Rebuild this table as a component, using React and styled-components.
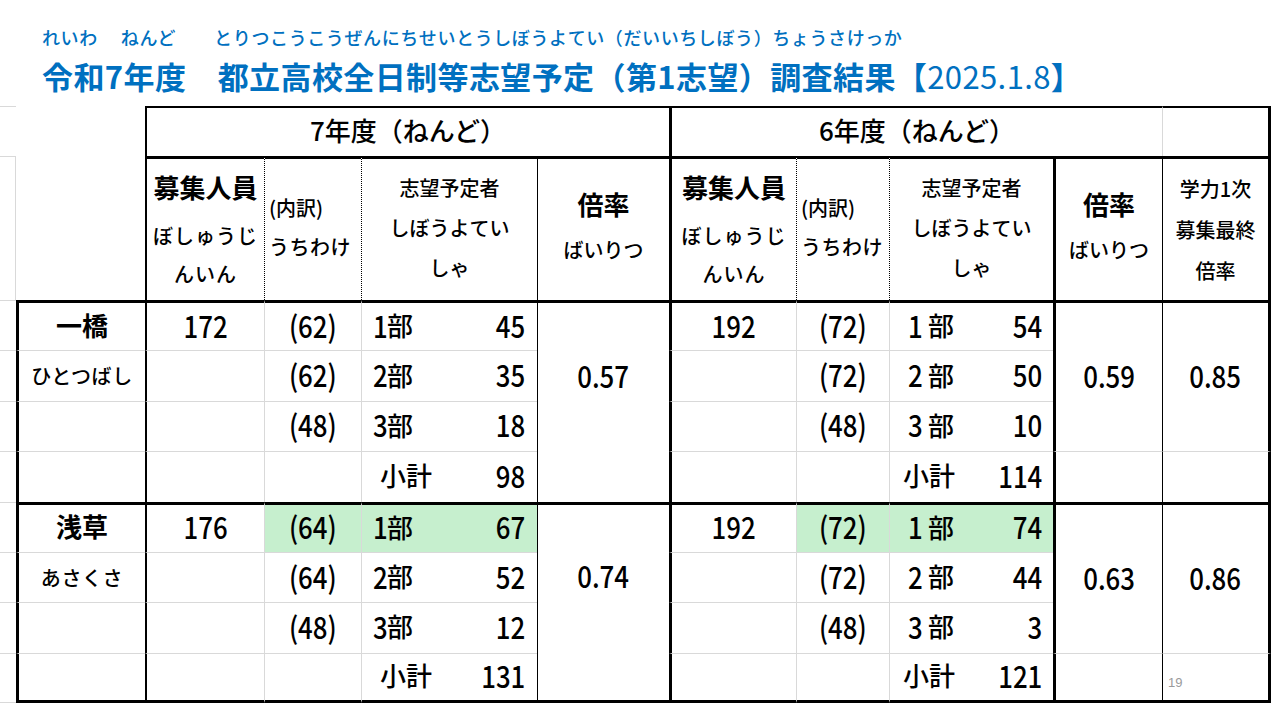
import React from "react";
import styled, { createGlobalStyle } from "styled-components";

const GlobalStyle = createGlobalStyle`
  html, body {
    margin: 0;
    padding: 0;
    background: #fff;
  }
  body {
    font-family: "Noto Sans CJK JP", sans-serif;
    color: #000;
  }
`;

const LINES = {
  thick: "3px solid #000",
  mid: "2px solid #000",
  thin: "1px solid #000",
  grey: "1px solid #d9d9d9",
  dot: "1px dotted #000"
};
const line = kind => LINES[kind] || "none";

const Page = styled.div`
  width: 1280px;
  height: 720px;
  overflow: hidden;
  display: flex;
  flex-direction: column;
`;

const Heading = styled.header`
  padding: 26px 0 0 42px;
  color: #0070c0;
  display: flex;
  flex-direction: column;
`;

const RubyLine = styled.div`
  display: flex;
  font-size: 18px;
  font-weight: 500;
  line-height: 22px;
  letter-spacing: 0.6px;
  white-space: nowrap;
`;

const Ruby = styled.span`
  margin-left: ${p => p.$gap || 0}px;
`;

const Title = styled.h1`
  margin: 8px 0 0;
  font-size: 31px;
  font-weight: 700;
  line-height: 40px;
  letter-spacing: 0.4px;
  white-space: nowrap;
`;

const DateText = styled.span`
  font-weight: 400;
`;

const Sheet = styled.div`
  margin-top: 10px;
  display: grid;
  grid-template-columns: 16px 129px 119px 97px 176px 132px 127px 93px 164px 109px 109px;
  grid-template-rows: 50px 144px repeat(8, 50.375px);
`;

const Cell = styled.div`
  grid-column: ${p => p.$col};
  grid-row: ${p => p.$row};
  box-sizing: border-box;
  min-width: 0;
  border-left: ${p => line(p.$l)};
  border-top: ${p => line(p.$t)};
  border-right: ${p => line(p.$r)};
  border-bottom: ${p => line(p.$b)};
  background: ${p => (p.$hl ? "#c6efce" : "transparent")};
  display: flex;
  flex-direction: column;
  align-items: ${p => p.$align || "center"};
  justify-content: center;
  padding: ${p => p.$pad || "0"};
`;

const SplitCell = styled(Cell)`
  flex-direction: row;
  justify-content: space-between;
  align-items: center;
`;

const PageCell = styled(Cell)`
  justify-content: flex-end;
  align-items: flex-start;
`;

const YearHead = styled.div`
  font-size: 26px;
  font-weight: 500;
  line-height: 1;
  padding-bottom: 5px;
  white-space: nowrap;
`;

const HeadBig = styled.div`
  font-size: 26px;
  font-weight: 700;
  line-height: 40px;
  margin-bottom: ${p => p.$gap || 0}px;
  white-space: nowrap;
`;

const HeadKana = styled.div`
  font-size: 20px;
  font-weight: 500;
  line-height: ${p => p.$lh || 39}px;
  letter-spacing: ${p => p.$ls || 0}px;
  white-space: nowrap;
`;

const Name = styled.div`
  font-size: 26px;
  font-weight: 700;
  line-height: 1;
  padding-bottom: 4px;
`;

const NameKana = styled.div`
  font-size: 20px;
  font-weight: 500;
  letter-spacing: 0.6px;
  line-height: 1;
`;

const Num = styled.span`
  display: inline-block;
  font-size: 30px;
  font-weight: 500;
  line-height: 1;
  padding-bottom: 4px;
  transform: scaleX(0.86);
  transform-origin: ${p => p.$origin || "center"};
  white-space: nowrap;
`;

const LabelNum = styled(Num)`
  margin-right: -3px;
`;

const Label = styled.span`
  display: inline-flex;
  align-items: center;
  font-size: 26px;
  font-weight: 500;
  line-height: 1;
  white-space: pre;
`;

const LabelText = styled.span`
  padding-bottom: 3px;
`;

const PageNo = styled.span`
  font-family: "Liberation Sans", sans-serif;
  font-size: 13px;
  color: #9a9a9a;
  line-height: 1;
`;

const schools = [
  {
    name: "一橋",
    kana: "ひとつばし",
    y7: {
      cap: 172,
      parts: [62, 62, 48],
      vals: [45, 35, 18],
      total: 98,
      rate: "0.57"
    },
    y6: {
      cap: 192,
      parts: [72, 72, 48],
      vals: [54, 50, 10],
      total: 114,
      rate: "0.59",
      final: "0.85"
    },
    hl: false
  },
  {
    name: "浅草",
    kana: "あさくさ",
    y7: {
      cap: 176,
      parts: [64, 64, 48],
      vals: [67, 52, 12],
      total: 131,
      rate: "0.74"
    },
    y6: {
      cap: 192,
      parts: [72, 72, 48],
      vals: [74, 44, 3],
      total: 121,
      rate: "0.63",
      final: "0.86"
    },
    hl: true
  }
];

const HeaderRows = () => (
  <>
    <Cell $col={1} $row={1} $t="grey" />
    <Cell $col="3 / 7" $row={1} $t="mid" $l="mid">
      <YearHead>7年度（ねんど）</YearHead>
    </Cell>
    <Cell $col="7 / 11" $row={1} $t="mid" $l="thick">
      <YearHead>6年度（ねんど）</YearHead>
    </Cell>
    <Cell $col={11} $row={1} $t="mid" $l="grey" $r="thick" />

    <Cell $col={1} $row={2} $t="grey" $r="grey" />
    {[3, 7].map(c => {
      const first = c === 3;
      return (
        <React.Fragment key={c}>
          <Cell $col={c} $row={2} $t="thick" $l={first ? "mid" : "thick"}>
            <HeadBig $gap={10}>募集人員</HeadBig>
            <HeadKana $ls={1} $lh={38}>ぼしゅうじ</HeadKana>
            <HeadKana $ls={1} $lh={38}>んいん</HeadKana>
          </Cell>
          <Cell
            $col={c + 1}
            $row={2}
            $t="thick"
            $l="dot"
            $align="flex-start"
            $pad="0 0 6px 4px"
          >
            <HeadKana>(内訳)</HeadKana>
            <HeadKana $ls={0.5}>うちわけ</HeadKana>
          </Cell>
          <Cell $col={c + 2} $row={2} $t="thick" $l="dot" $pad="0 0 4px">
            <HeadKana $lh={40}>志望予定者</HeadKana>
            <HeadKana $lh={40}>しぼうよてい</HeadKana>
            <HeadKana $lh={40}>しゃ</HeadKana>
          </Cell>
          <Cell
            $col={c + 3}
            $row={2}
            $t="thick"
            $l={first ? "thin" : "thick"}
            $pad="0 0 3px"
          >
            <HeadBig $gap={4}>倍率</HeadBig>
            <HeadKana $lh={44}>ばいりつ</HeadKana>
          </Cell>
        </React.Fragment>
      );
    })}
    <Cell $col={11} $row={2} $t="thick" $l="thin" $r="thick">
      <HeadKana $lh={41}>学力1次</HeadKana>
      <HeadKana $lh={41}>募集最終</HeadKana>
      <HeadKana $lh={41}>倍率</HeadKana>
    </Cell>
  </>
);

const PartLabel = ({ index, spaced }) => (
  <Label>
    <LabelNum $origin="left">{index + 1}</LabelNum>
    <LabelText>{spaced ? " 部" : "部"}</LabelText>
  </Label>
);

const Subtotal = () => (
  <Label>
    <LabelText>小計</LabelText>
  </Label>
);

const SchoolBlock = ({ school, start, last }) => {
  const { y7, y6 } = school;
  const rows = [0, 1, 2, 3];
  const bottom = i => (last && i === 3 ? "thick" : undefined);
  return (
    <>
      {rows.map(i => {
        const row = start + i;
        const t = i === 0 ? "thick" : "grey";
        const hl = school.hl && i === 0;
        const b = bottom(i);
        return (
          <React.Fragment key={i}>
            <Cell
              $col={1}
              $row={row}
              $t="grey"
              $b={last && i === 3 ? "grey" : undefined}
            />
            <Cell $col={2} $row={row} $t={t} $l="thick" $b={b}>
              {i === 0 && <Name>{school.name}</Name>}
              {i === 1 && <NameKana>{school.kana}</NameKana>}
            </Cell>

            <Cell $col={3} $row={row} $t={t} $l="mid" $b={b}>
              {i === 0 && <Num>{y7.cap}</Num>}
            </Cell>
            <Cell $col={4} $row={row} $t={t} $l="grey" $b={b} $hl={hl}>
              {i < 3 && <Num>({y7.parts[i]})</Num>}
            </Cell>
            <SplitCell
              $col={5}
              $row={row}
              $t={t}
              $l="grey"
              $b={b}
              $hl={hl}
              $pad={i < 3 ? "0 12px 0 11px" : "0 12px 0 18px"}
            >
              {i < 3 ? <PartLabel index={i} /> : <Subtotal />}
              <Num $origin="right">{i < 3 ? y7.vals[i] : y7.total}</Num>
            </SplitCell>

            <Cell $col={7} $row={row} $t={t} $l="thick" $b={b}>
              {i === 0 && <Num>{y6.cap}</Num>}
            </Cell>
            <Cell $col={8} $row={row} $t={t} $l="grey" $b={b} $hl={hl}>
              {i < 3 && <Num>({y6.parts[i]})</Num>}
            </Cell>
            <SplitCell
              $col={9}
              $row={row}
              $t={t}
              $l="grey"
              $b={b}
              $hl={hl}
              $pad={i < 3 ? "0 11px 0 18px" : "0 11px 0 13px"}
            >
              {i < 3 ? <PartLabel index={i} spaced /> : <Subtotal />}
              <Num $origin="right">{i < 3 ? y6.vals[i] : y6.total}</Num>
            </SplitCell>
          </React.Fragment>
        );
      })}

      <Cell
        $col={6}
        $row={`${start} / ${start + 4}`}
        $t="thick"
        $l="thin"
        $b={last ? "thick" : undefined}
        $pad="0 0 50px"
      >
        <Num>{y7.rate}</Num>
      </Cell>

      <Cell $col={10} $row={`${start} / ${start + 3}`} $t="thick" $l="thick">
        <Num>{y6.rate}</Num>
      </Cell>
      <Cell $col={10} $row={start + 3} $t="grey" $l="thick" $b={bottom(3)} />

      <Cell
        $col={11}
        $row={`${start} / ${start + 3}`}
        $t="thick"
        $l="thin"
        $r="thick"
      >
        <Num>{y6.final}</Num>
      </Cell>
      <PageCell
        $col={11}
        $row={start + 3}
        $t="grey"
        $l="thin"
        $r="thick"
        $b={bottom(3)}
        $pad="0 0 11px 5px"
      >
        {last && <PageNo>19</PageNo>}
      </PageCell>
    </>
  );
};

const App = () => (
  <Page>
    <GlobalStyle />
    <Heading>
      <RubyLine>
        <Ruby>れいわ</Ruby>
        <Ruby $gap={23}>ねんど</Ruby>
        <Ruby $gap={38}>
          とりつこうこうぜんにちせいとうしぼうよてい（だいいちしぼう）ちょうさけっか
        </Ruby>
      </RubyLine>
      <Title>
        令和7年度　都立高校全日制等志望予定（第1志望）調査結果【
        <DateText>2025.1.8</DateText>】
      </Title>
    </Heading>
    <Sheet>
      <HeaderRows />
      {schools.map((school, idx) => (
        <SchoolBlock
          key={school.name}
          school={school}
          start={3 + idx * 4}
          last={idx === schools.length - 1}
        />
      ))}
    </Sheet>
  </Page>
);

export default App;
